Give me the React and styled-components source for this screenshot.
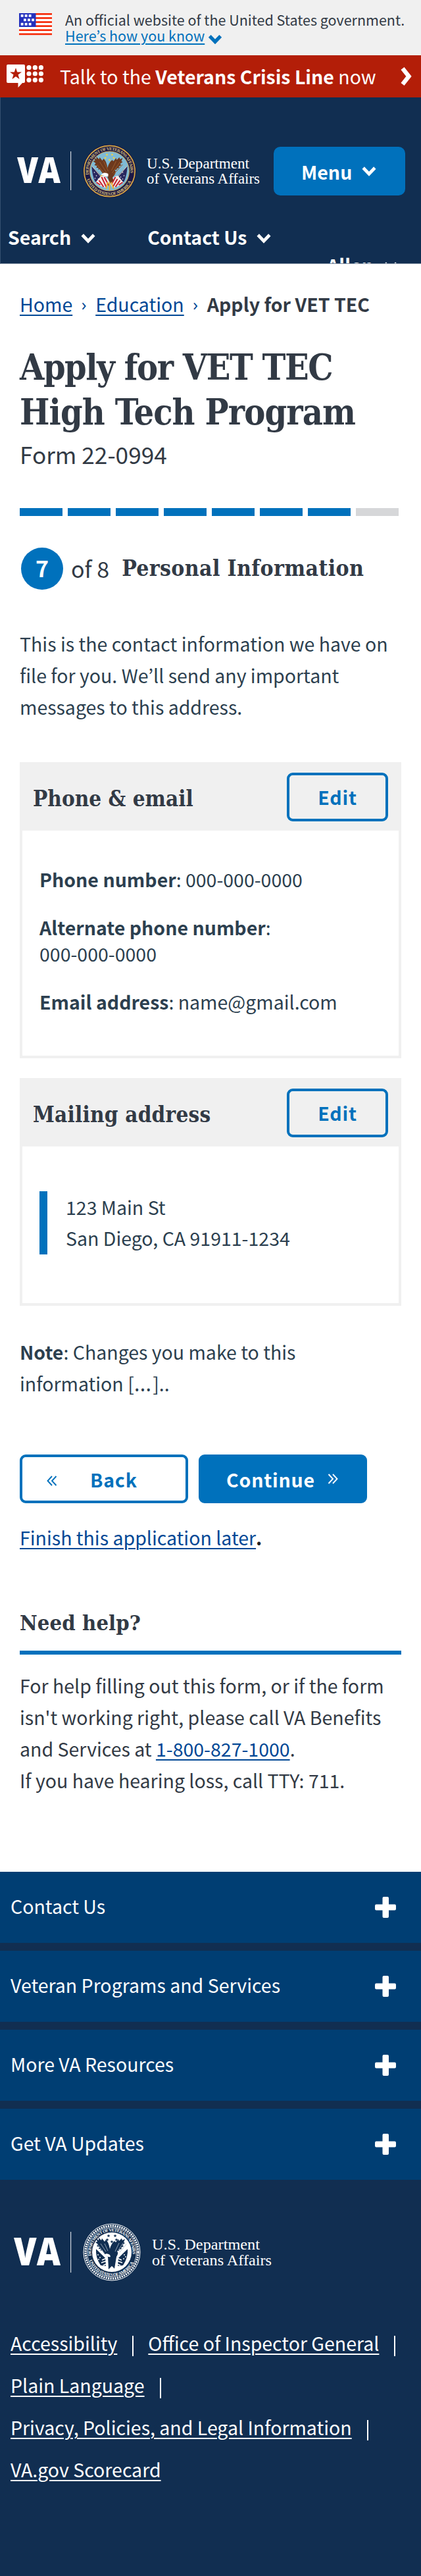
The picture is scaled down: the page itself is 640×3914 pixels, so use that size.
import React from 'react';
import styled, { createGlobalStyle, css } from 'styled-components';

const sans = '"Noto Sans CJK KR", "Noto Sans CJK SC", "Noto Sans", sans-serif';
const slab = '"DejaVu Serif Condensed", "DejaVu Serif", serif';
const navy = '#112e51';
const blue = '#0071bc';
const link = '#004795';
const ink = '#323a45';

const GlobalStyle = createGlobalStyle`
  * { box-sizing: border-box; }
  body {
    margin: 0;
    background: #fff;
    color: ${ink};
    font-family: ${sans};
    font-size: 28.5px;
    line-height: 48px;
  }
  h1, h2, h3, p, ul { margin: 0; padding: 0; }
  button { font-family: inherit; cursor: pointer; }
  svg { display: block; flex: none; }
`;

const Page = styled.div`
  width: 640px;
  height: 3914px;
  overflow: hidden;
  display: flex;
  flex-direction: column;
`;

const Link = styled.a`
  color: ${(p) => p.$color || link};
  text-decoration: underline;
  text-decoration-thickness: 2px;
  text-underline-offset: ${(p) => p.$offset || 4}px;
`;

const Banner = styled.div`
  display: flex;
  height: 84px;
  flex: none;
  gap: 20px;
  padding: 18px 0 0 29px;
  background: #f0f0f0;
  font-size: 21.5px;
  line-height: 24px;
  white-space: nowrap;
`;
const BannerFlag = styled.div`
  width: 50px;
  padding-top: 2px;
`;
const BannerLine = styled.div`
  display: flex;
  gap: 5px;
  color: ${blue};
  svg { margin-top: 10px; }
`;

const Crisis = styled.div`
  display: flex;
  align-items: center;
  height: 64px;
  flex: none;
  padding: 0 13px 0 10px;
  background: #b31e08;
  color: #fff;
  white-space: nowrap;
`;
const CrisisText = styled.div`
  flex: 1;
  margin-left: 25px;
`;

const Header = styled.header`
  height: 253px;
  flex: none;
  overflow: hidden;
  padding-top: 71px;
  background: ${navy};
  border-bottom: 1px solid #75859a;
  border-left: 1px solid #35506f;
  color: #fff;
`;
const HeaderTop = styled.div`
  display: flex;
  align-items: center;
  justify-content: space-between;
  height: 82px;
  padding: 0 24px 0 23px;
`;
const MenuButton = styled.button`
  display: flex;
  align-items: center;
  gap: 15px;
  width: 200px;
  height: 74px;
  padding: 0 0 0 42px;
  border: 0;
  border-radius: 10px;
  background: ${blue};
  color: #fff;
  font-size: 28.5px;
  font-weight: 700;
`;
const Nav = styled.nav`
  display: flex;
  flex-wrap: wrap;
  row-gap: 3px;
  margin-top: 39px;
  font-weight: 700;
  line-height: 40px;
`;
const NavItem = styled.div`
  display: flex;
  align-items: center;
  gap: 15px;
  margin-left: ${(p) => p.$left}px;
  svg { margin-top: 4px; }
`;

const Main = styled.main`
  display: flex;
  flex-direction: column;
  height: 2443px;
  flex: none;
  padding: 41px 30px 0;
`;
const Crumbs = styled.div`
  display: flex;
  height: 40px;
  line-height: 40px;
  white-space: nowrap;
`;
const CrumbMark = styled.span`
  width: 35px;
  padding-bottom: 2px;
  text-align: center;
  color: ${link};
  font-family: "Open Sans", sans-serif;
  font-size: 26px;
`;
const Title = styled.h1`
  margin-top: 43px;
  font: 700 53.5px/68px ${slab};
  white-space: nowrap;
`;
const TitleLine = styled.span`
  display: block;
  letter-spacing: ${(p) => p.$track}px;
`;
const FormNumber = styled.p`
  margin-top: 4px;
  font-size: 35.2px;
  line-height: 50px;
`;
const Progress = styled.div`
  display: grid;
  grid-template-columns: repeat(8, 65px);
  column-gap: 8px;
  margin-top: 57px;
`;
const Segment = styled.div`
  height: 12px;
  background: ${(p) => (p.$done ? blue : '#d6d7d9')};
`;
const Step = styled.div`
  display: flex;
  align-items: center;
  height: 64px;
  margin: 48px 0 0 2px;
  font-size: 34px;
  white-space: nowrap;
`;
const StepNumber = styled.span`
  display: flex;
  align-items: center;
  justify-content: center;
  width: 64px;
  height: 64px;
  margin-right: 12px;
  padding-bottom: 2px;
  border-radius: 50%;
  background: ${blue};
  color: #fff;
  font-weight: 700;
`;
const StepName = styled.h2`
  margin-left: 19px;
  font: 700 33.5px/48px ${slab};
  letter-spacing: 0.35px;
`;
const Body = styled.p`
  margin-top: ${(p) => p.$top}px;
  color: #2c3f4f;
`;

const Card = styled.section`
  height: ${(p) => p.$height}px;
  margin-top: ${(p) => p.$top}px;
  border: 4px solid #f0f0f0;
`;
const CardHead = styled.div`
  display: flex;
  justify-content: space-between;
  align-items: center;
  height: 100px;
  padding: 0 16px 3px;
  background: #f0f0f0;
`;
const CardTitle = styled.h3`
  padding-top: 6px;
  font: 700 33px/48px ${slab};
  letter-spacing: ${(p) => p.$track}px;
`;
const CardBody = styled.div`
  display: flex;
  flex-direction: column;
  gap: 33px;
  padding: 54px 26px 0;
  color: #2c3f4f;
  line-height: 40px;
`;
const Address = styled.div`
  margin-top: 14px;
  padding: 0 0 2px 28px;
  border-left: 12px solid ${blue};
  line-height: 47px;
`;

const Button = styled.button`
  display: flex;
  align-items: center;
  width: ${(p) => p.$width}px;
  height: 74px;
  padding: 0;
  border: 4px solid ${blue};
  border-radius: 9px;
  background: ${(p) => (p.$filled ? blue : 'transparent')};
  color: ${(p) => (p.$filled ? '#fff' : blue)};
  font-size: 28.5px;
  font-weight: 700;
  letter-spacing: 0.8px;
  ${(p) => p.$center && css`justify-content: center;`}
`;
const BackButton = styled(Button)`
  padding-left: 37px;
  gap: 50px;
  svg { margin-top: 6px; }
`;
const ContinueButton = styled(Button)`
  padding-left: 38px;
  gap: 19px;
`;
const Actions = styled.div`
  display: flex;
  gap: 16px;
  margin-top: 84px;
`;
const Finish = styled.p`
  margin-top: 28px;
  color: #212121;
`;
const Dots = styled.span`
  font-family: "Open Sans", sans-serif;
  font-size: 34px;
  line-height: 0;
  letter-spacing: 2px;
`;
const HelpTitle = styled.h2`
  margin-top: 84px;
  padding-bottom: 20px;
  border-bottom: 6px solid ${blue};
  font: 700 32.5px/44px ${slab};
  letter-spacing: 0.1px;
`;
const HelpText = styled.p`
  margin-top: 23px;
  white-space: nowrap;
`;

const Footer = styled.footer`
  flex: 1;
  background: ${navy};
  color: #fff;
`;
const Accordion = styled.div`
  display: flex;
  flex-direction: column;
  gap: 12px;
`;
const AccordionRow = styled.div`
  display: flex;
  align-items: center;
  justify-content: space-between;
  height: 108px;
  padding: 0 38px 4px 16px;
  background: #003e73;
  svg { margin-top: 4px; }
`;
const FooterLogo = styled.div`
  padding: 66px 0 0 20px;
`;
const FooterLinks = styled.ul`
  display: flex;
  flex-wrap: wrap;
  column-gap: 22px;
  margin: 62px 0 0;
  padding: 0 10px 0 16px;
  list-style: none;
  line-height: 64px;
  white-space: nowrap;
`;
const FooterItem = styled.li`
  display: flex;
  align-items: center;
  gap: 23px;
`;
const Rule = styled.span`
  width: 2px;
  height: 31px;
  margin-top: 8px;
  background: #fff;
`;

const Chevron = ({ width = 22, height = 16, stroke = 4.8 }) => (
  <svg width={width} height={height} viewBox="0 0 22 16" fill="none">
    <path d="M2.2 3 11 12.2 19.8 3" stroke="currentColor" strokeWidth={stroke} />
  </svg>
);

const Flag = () => (
  <svg width="50" height="34" viewBox="0 0 50 34">
    <rect width="50" height="33" fill="#fff" />
    {[0, 6.1, 12.2, 18.3, 24.4, 30.5].map((y) => (
      <rect key={y} y={y} width="50" height="2.7" fill="#f62c0a" />
    ))}
    <rect width="25.5" height="21" fill="#2330bd" />
    {[[2.7, 2], [8.7, 2], [14.7, 2], [7, 8.4], [13, 8.4], [19.2, 8.4], [2.7, 14.8], [8.7, 14.8], [14.7, 14.8]].map(([x, y]) => (
      <rect key={`${x}-${y}`} x={x} y={y} width="3.8" height="3.8" fill="#fff" />
    ))}
  </svg>
);

const CrisisIcon = () => (
  <svg width="56" height="36" viewBox="0 0 56 36" fill="#fff">
    <path d="M2 0h24q2 0 2 2v24q0 2-2 2h-2l-6.5 7V28H2q-2 0-2-2V2q0-2 2-2z" />
    <path d="M14 5l2.2 6.5h6.8l-5.5 4.1 2.1 6.6-5.6-4-5.6 4 2.1-6.6L5 11.500h6.800z" fill="#b31e08" />
    {[34, 43.3, 52.4].map((x) => [4.7, 14, 23.6].map((y) => <circle key={`${x}-${y}`} cx={x} cy={y} r="3.6" />))}
  </svg>
);

const Plus = () => (
  <svg width="32" height="32" viewBox="0 0 32 32" fill="#fff">
    <rect x="11.500" width="9.500" height="32" rx="2" />
    <rect y="11.500" width="32" height="9" rx="2" />
  </svg>
);

const DoubleAngle = ({ flip }) => (
  <svg width="16" height="16" viewBox="0 0 16 16" fill="none" stroke="currentColor" strokeWidth="1.9">
    {flip ? <path d="M1.500 1l6.500 7-6.500 7M8 1l6.500 7L8 15" /> : <path d="M8 1L1.500 8 8 15M14.500 1L8 8l6.500 7" />}
  </svg>
);

const feathers = 'M-2 9C-9 7-13 0-15-3l-2 1 0-3-3 0 1-3-4-1 2-3-4-3 3-1-2-5 4 3 0-4 4 4 1-3 4 5 2-3c4 4 5 9 6 14 1-4 3-9 7-12l2 2 4-5 1 3 4-4 1 3 4-2-2 5 2 1-4 3 2 2-4 2 1 2-4 1 0 2-3 0C11 1 8 7 3 11z';
const star = 'M0-2.600l.7 1.800h1.900l-1.500 1.200.5 1.900L0 1.200l-1.600 1.100.5-1.900L-2.600-.8h1.900z';

const RingText = ({ id, radius, size, fill }) => (
  <g fill={fill} fontFamily='"Liberation Serif", serif' fontWeight="700" fontSize={size}>
    <path id={`${id}-top`} d={`M${-radius * 0.985} ${radius * 0.17}A${radius} ${radius} 0 1 1 ${radius * 0.985} ${radius * 0.17}`} fill="none" />
    <path id={`${id}-low`} d={`M${-(radius + 5) * 0.94} ${(radius + 5) * 0.34}A${radius + 5} ${radius + 5} 0 0 0 ${(radius + 5) * 0.94} ${(radius + 5) * 0.34}`} fill="none" />
    <text textLength={radius * 3.4} lengthAdjust="spacing">
      <textPath href={`#${id}-top`}>DEPARTMENT OF VETERANS AFFAIRS</textPath>
    </text>
    <text textLength={radius * 2.700} lengthAdjust="spacing">
      <textPath href={`#${id}-low`}>UNITED STATES OF AMERICA</textPath>
    </text>
  </g>
);

const ColorSeal = () => (
  <g transform="translate(142.500 41)">
    <circle r="40.500" fill="#1c1746" />
    <circle r="38.600" fill="none" stroke="#d9ad45" strokeWidth="1.700" />
    <circle r="30" fill="#7fbad5" stroke="#c9a04a" strokeWidth="1" />
    <RingText id="color" radius={31.8} size={6.6} fill="#d8c07a" />
    {[[-4, -25], [4, -25], [-6.500, -20], [6.500, -20], [0, -17]].map(([x, y]) => (
      <path key={`${x}${y}`} d={star} transform={`translate(${x} ${y}) scale(.8)`} fill="#f5d33c" />
    ))}
    <path d="M-27-8L-12 8-12 20-22 16Q-27 5-27-8zM27-8L12 8 12 20 22 16Q27 5 27-8z" fill="#29295f" />
    <path d="M-27-8L-9 13M27-8L9 13" stroke="#e9dcc0" strokeWidth="1" />
    <g fill="#fff">{[[-23, 2], [-20, 7], [-22, 11], [-17, 12], [20, 2], [22, 7], [17, 9], [20, 12]].map(([x, y]) => <circle key={`${x}${y}`} cx={x} cy={y} r=".8" />)}</g>
    <path d="M-13 7Q-6 5 0 17L-4 25Q-13 25-21 17zM13 7Q6 7 0 17L4 25Q13 25 21 17z" fill="#f4ece8" />
    <path d="M-12 9L-5 24M-8 9L-1 22M-16 14L-9 24M-20 17L-14 21M12 12L5 24M9 9L3 20M16 14L9 24M20 17L14 21" stroke="#c7202f" strokeWidth="2" />
    <path d={feathers} fill="#6d391d" />
    <path d="M-15-14L-4 3M-19-10L-6 6M-9-15L-2 0M16-14L4 3M20-10L6 5M10-15L3-1" stroke="#9a5c2c" strokeWidth="1" />
    <path d="M-3 9l7-1 2 6-5 5z" fill="#6d391d" />
    <path d="M-2 4Q-9 0-13 6l3 0Q-7 9-2 8z" fill="#fff" />
    <path d="M-13 6l-1 3 4-3z" fill="#edbb36" />
    <path d="M-3 17L-5 27M0 16L0 29M3 17L6 27" stroke="#e8b331" strokeWidth="2" />
  </g>
);

const WhiteSeal = () => (
  <g transform="translate(150 44)">
    <circle r="43" fill="none" stroke="#fff" strokeWidth="1" />
    <circle r="40" fill="none" stroke="#fff" strokeWidth="3" strokeDasharray="2.200 1.300" />
    <circle r="37.500" fill="none" stroke="#fff" strokeWidth=".8" />
    <circle r="30" fill="#fff" />
    <RingText id="mono" radius={31.6} size={6.6} fill="#fff" />
    <g fill={navy} stroke="none">
      {[[-5, -25], [5, -25], [-7, -19], [7, -19], [0, -16]].map(([x, y]) => (
        <path key={`${x}${y}`} d={star} transform={`translate(${x} ${y})`} />
      ))}
      <path d="M-24-5L-10 8-9 21-17 20Q-25 8-24-5zM24-5L10 8 9 21 17 20Q25 8 24-5z" />
      <path d={feathers} />
      <path d="M-6 6L7 7 4 25 0 21-5 26z" />
    </g>
    <path d="M-22-12L-11 2M22-12L12 0M-17-13L-9-1M17-14L8 0M-11-13L-6-2M11-14L5-1" stroke="#aebccc" strokeWidth=".8" />
    <path d="M-25-8L-8 9M25-8L8 9" stroke="#fff" strokeWidth="2.500" />
    <path d="M-15 12L-8 9M-16 16L-7 13M-13 20L-6 17M15 12L8 9M16 16L7 13M13 20L6 17" stroke="#fff" strokeWidth="1.500" />
    <g fill="#fff">{[[-21, 4], [-18, 8], [-20, 11], [19, 4], [21, 7], [18, 10]].map(([x, y]) => <circle key={`${x}${y}`} cx={x} cy={y} r=".9" />)}</g>
    <path d="M-3 4Q-9 0-13 5l4 0Q-6 8-2 7z" fill="#fff" />
  </g>
);

const wordmark = { fontFamily: '"Open Sans", sans-serif', fontWeight: 800, fill: '#fff' };
const agency = { fontFamily: '"Liberation Serif", serif', fontSize: 23, fill: '#fff', lengthAdjust: 'spacingAndGlyphs' };

const HeaderLogo = () => (
  <svg width="374" height="82" viewBox="0 0 374 82">
    <text x="2" y="59" fontSize="55" textLength="66" lengthAdjust="spacingAndGlyphs" {...wordmark}>VA</text>
    <rect x="83" y="11" width="1.200" height="59" fill="#cfd6de" />
    <ColorSeal />
    <text x="199" y="37" textLength="156" {...agency}>U.S. Department</text>
    <text x="199" y="60" textLength="172" {...agency}>of Veterans Affairs</text>
  </svg>
);

const FooterMark = () => (
  <svg width="396" height="88" viewBox="0 0 396 88">
    <text x="1" y="64" fontSize="59" textLength="71" lengthAdjust="spacingAndGlyphs" {...wordmark}>VA</text>
    <rect x="87" y="13" width="1.200" height="62" fill="#cfd6de" />
    <WhiteSeal />
    <text x="211" y="39.500" textLength="164" {...agency}>U.S. Department</text>
    <text x="211" y="64" textLength="182" {...agency}>of Veterans Affairs</text>
  </svg>
);

const steps = [1, 2, 3, 4, 5, 6, 7, 8];
const sections = ['Contact Us', 'Veteran Programs and Services', 'More VA Resources', 'Get VA Updates'];
const footerLinks = [
  'Accessibility',
  'Office of Inspector General',
  'Plain Language',
  'Privacy, Policies, and Legal Information',
  'VA.gov Scorecard',
];

export default function App() {
  return (
    <Page>
      <GlobalStyle />
      <Banner>
        <BannerFlag><Flag /></BannerFlag>
        <div>
          <div>An official website of the United States government.</div>
          <BannerLine>
            <Link $color={blue} $offset={3}>Here’s how you know</Link>
            <Chevron width={22} height={15} stroke={5.6} />
          </BannerLine>
        </div>
      </Banner>
      <Crisis>
        <CrisisIcon />
        <CrisisText>Talk to the <b>Veterans Crisis Line</b> now</CrisisText>
        <svg width="18" height="30" viewBox="0 0 18 30" fill="none">
          <path d="M3 3l9.500 12L3 27" stroke="#fff" strokeWidth="6.500" />
        </svg>
      </Crisis>
      <Header>
        <HeaderTop>
          <HeaderLogo />
          <MenuButton>Menu <Chevron /></MenuButton>
        </HeaderTop>
        <Nav>
          <NavItem $left={11}>Search <Chevron /></NavItem>
          <NavItem $left={79}>Contact Us <Chevron /></NavItem>
          <NavItem $left={496}>Allen <Chevron /></NavItem>
        </Nav>
      </Header>
      <Main>
        <Crumbs>
          <Link>Home</Link>
          <CrumbMark>›</CrumbMark>
          <Link>Education</Link>
          <CrumbMark>›</CrumbMark>
          <b>Apply for VET TEC</b>
        </Crumbs>
        <Title>
          <TitleLine $track={-1.47}>Apply for VET TEC</TitleLine>
          <TitleLine $track={-0.9}>High Tech Program</TitleLine>
        </Title>
        <FormNumber>Form 22-0994</FormNumber>
        <Progress>
          {steps.map((n) => <Segment key={n} $done={n < 8} />)}
        </Progress>
        <Step>
          <StepNumber>7</StepNumber>
          of 8
          <StepName>Personal Information</StepName>
        </Step>
        <Body $top={58}>
          This is the contact information we have on<br />
          file for you. We’ll send any important<br />
          messages to this address.
        </Body>

        <Card $top={60} $height={450}>
          <CardHead>
            <CardTitle $track={0}>Phone &amp; email</CardTitle>
            <Button $width={154} $center>Edit</Button>
          </CardHead>
          <CardBody>
            <p><b>Phone number</b>: 000-000-0000</p>
            <p><b>Alternate phone number</b>:<br />000-000-0000</p>
            <p><b>Email address</b>: name@gmail.com</p>
          </CardBody>
        </Card>
        <Card $top={30} $height={346}>
          <CardHead>
            <CardTitle $track={0.2}>Mailing address</CardTitle>
            <Button $width={154} $center>Edit</Button>
          </CardHead>
          <CardBody>
            <Address>123 Main St<br />San Diego, CA 91911-1234</Address>
          </CardBody>
        </Card>

        <Body $top={46}>
          <b>Note</b>: Changes you make to this<br />
          information [<Dots>…</Dots>]..
        </Body>
        <Actions>
          <BackButton $width={256}><DoubleAngle /> Back</BackButton>
          <ContinueButton $width={256} $filled>Continue <DoubleAngle flip /></ContinueButton>
        </Actions>
        <Finish><Link>Finish this application later</Link><b>.</b></Finish>

        <HelpTitle>Need help?</HelpTitle>
        <HelpText>
          For help filling out this form, or if the form<br />
          isn't working right, please call VA Benefits<br />
          and Services at <Link>1-800-827-1000</Link>.<br />
          If you have hearing loss, call TTY: 711.
        </HelpText>
      </Main>
      <Footer>
        <Accordion>
          {sections.map((name) => <AccordionRow key={name}>{name}<Plus /></AccordionRow>)}
        </Accordion>
        <FooterLogo><FooterMark /></FooterLogo>
        <FooterLinks>
          {footerLinks.map((name, i) => (
            <FooterItem key={name}>
              <Link $color="#fff">{name}</Link>
              {i < footerLinks.length - 1 && <Rule />}
            </FooterItem>
          ))}
        </FooterLinks>
      </Footer>
    </Page>
  );
}
